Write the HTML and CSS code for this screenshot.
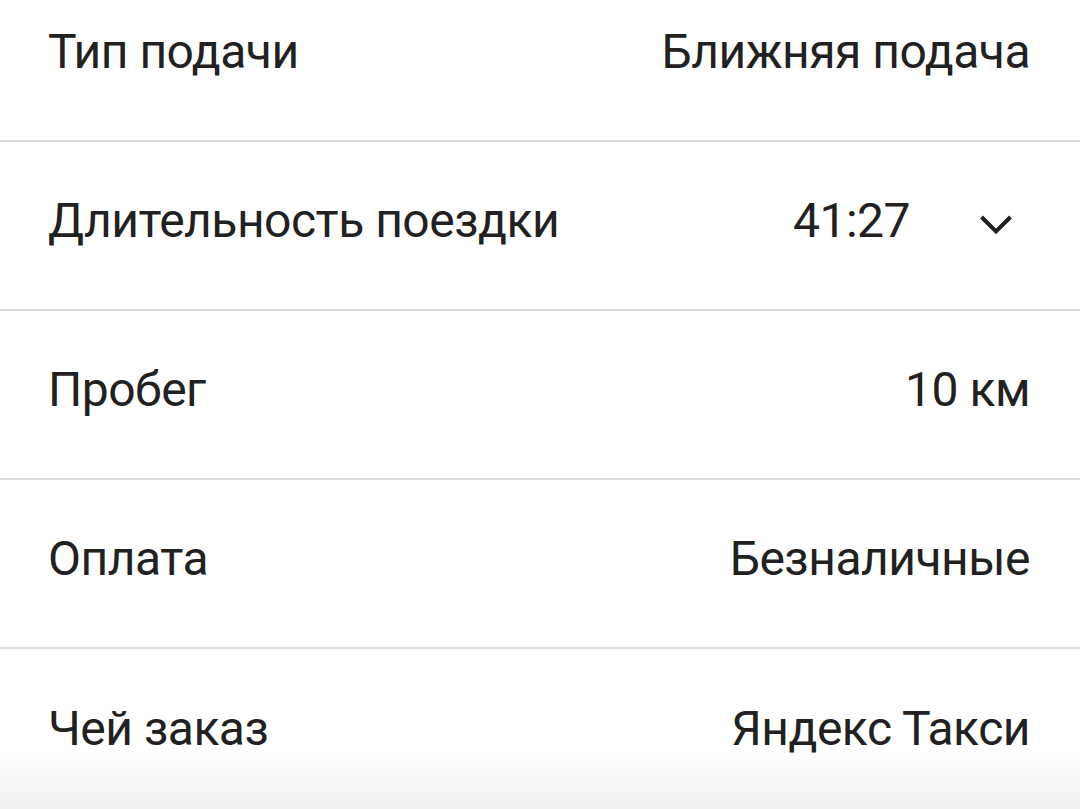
FILE: index.html
```html
<!DOCTYPE html>
<html lang="ru">
<head>
<meta charset="utf-8">
<link rel="stylesheet" href="styles.css">
</head>
<body>
<div class="screen">
  <ul class="list">
    <li class="row"><span class="label">Тип подачи</span><span class="value">Ближняя подача</span></li>
    <li class="row"><span class="label">Длительность поездки</span><span class="value-group"><span class="value">41:27</span><svg class="chevron" width="34" height="24" viewBox="0 0 34 24"><path d="M2.5 4 L17 18.5 L31.5 4" fill="none" stroke="#212121" stroke-width="4"/></svg></span></li>
    <li class="row"><span class="label">Пробег</span><span class="value">10 км</span></li>
    <li class="row"><span class="label">Оплата</span><span class="value">Безналичные</span></li>
    <li class="row"><span class="label">Чей заказ</span><span class="value">Яндекс Такси</span></li>
  </ul>
  <div class="fade"></div>
</div>
</body>
</html>
```
FILE: styles.css
```css
html, body {
  margin: 0;
  padding: 0;
  background: #fff;
}
.screen {
  position: relative;
  width: 1080px;
  height: 809px;
  overflow: hidden;
  font-family: Roboto, "Noto Sans", sans-serif;
  color: #212121;
}
.list {
  list-style: none;
  margin: -27px 0 0 0;
  padding: 0;
}
.row {
  box-sizing: border-box;
  display: flex;
  align-items: center;
  justify-content: space-between;
  height: 169px;
  padding: 0 50px 10px 48px;
  border-bottom: 2px solid #dadada;
  font-size: 48px;
  letter-spacing: -0.5px;
  line-height: 1;
}
.row:last-child {
  border-bottom: none;
}
.value-group {
  display: flex;
  align-items: center;
  gap: 69px;
}
.chevron {
  display: block;
  margin: 8px 17px 0 0;
}
.fade {
  position: absolute;
  left: 0;
  right: 0;
  bottom: 0;
  height: 56px;
  background: linear-gradient(to bottom, rgba(240,240,240,0), rgba(239,239,239,1));
}
```
